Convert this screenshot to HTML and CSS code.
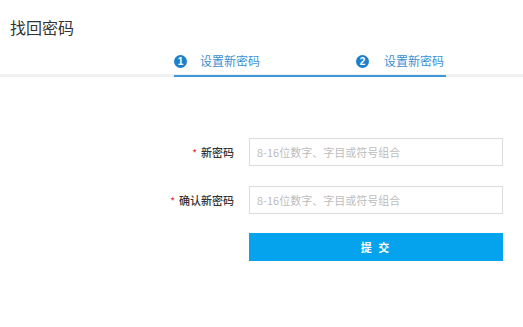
FILE: index.html
```html
<!DOCTYPE html>
<html lang="zh-CN">
<head>
<meta charset="utf-8">
<title>找回密码</title>
<link rel="stylesheet" href="styles.css">
</head>
<body>
<div class="header">
  <h1 class="title">找回密码</h1>
  <div class="tabbar">
    <div class="steps">
      <div class="step"><span class="num">1</span><span class="label">设置新密码</span></div>
      <div class="step step-last"><span class="num">2</span><span class="label">设置新密码</span></div>
    </div>
  </div>
</div>
<form class="form">
  <div class="row">
    <label class="field-label"><span class="star">*</span>新密码</label>
    <input class="input" type="password" placeholder="8-16位数字、字目或符号组合">
  </div>
  <div class="row">
    <label class="field-label"><span class="star">*</span>确认新密码</label>
    <input class="input" type="password" placeholder="8-16位数字、字目或符号组合">
  </div>
  <div class="row row-btn">
    <span class="field-label"></span>
    <button class="submit" type="button">提 交</button>
  </div>
</form>
</body>
</html>
```
FILE: styles.css
```css
* { box-sizing: border-box; }
html, body { margin: 0; padding: 0; background: #fff; }
body {
  font-family: "Noto Sans CJK SC", "Noto Sans", "Liberation Sans", sans-serif;
  color: #333;
}
.title {
  margin: 0;
  padding: 16px 0 0 10px;
  font-size: 16px;
  line-height: 22px;
  font-weight: normal;
  color: #333;
  height: 48px;
}
.tabbar {
  border-bottom: 3px solid #f0f0f0;
}
.steps {
  display: flex;
  justify-content: space-between;
  margin-left: 174px;
  width: 272px;
  height: 29px;
  margin-bottom: -3px;
  border-bottom: 2px solid #3d97d8;
  padding-top: 5px;
}
.step {
  display: flex;
  align-items: center;
  height: 16px;
}
.step-last { margin-right: 2px; }
.step-last .label { margin-left: 15px; }
.num {
  width: 13px;
  height: 13px;
  border-radius: 50%;
  background: #1f7fcb;
  color: #fff;
  font-family: "Liberation Sans", sans-serif;
  font-weight: bold;
  font-size: 10px;
  line-height: 13px;
  text-align: center;
}
.label {
  margin-left: 13px;
  font-size: 12px;
  color: #3a8fd3;
  line-height: 16px;
}
.form {
  display: flex;
  flex-direction: column;
  gap: 20px;
  margin-top: 61px;
}
.row {
  display: flex;
  align-items: center;
  gap: 15px;
}
.row-btn { margin-top: -1px; }
.field-label {
  width: 234px;
  text-align: right;
  font-size: 11px;
  font-weight: 500;
  color: #333;
}
.star {
  color: #e4393c;
  margin-right: 4px;
  font-size: 10px;
}
.input {
  width: 254px;
  height: 28px;
  border: 1px solid #dcdcdc;
  padding: 0 7px;
  font-family: inherit;
  font-size: 11px;
  outline: none;
}
.input::placeholder { color: #bcbcbc; }
.submit {
  width: 254px;
  height: 28px;
  border: none;
  background: #05a3ee;
  color: #fff;
  font-family: inherit;
  font-size: 11px;
  font-weight: bold;
  letter-spacing: 2px;
  padding: 0;
}
```
